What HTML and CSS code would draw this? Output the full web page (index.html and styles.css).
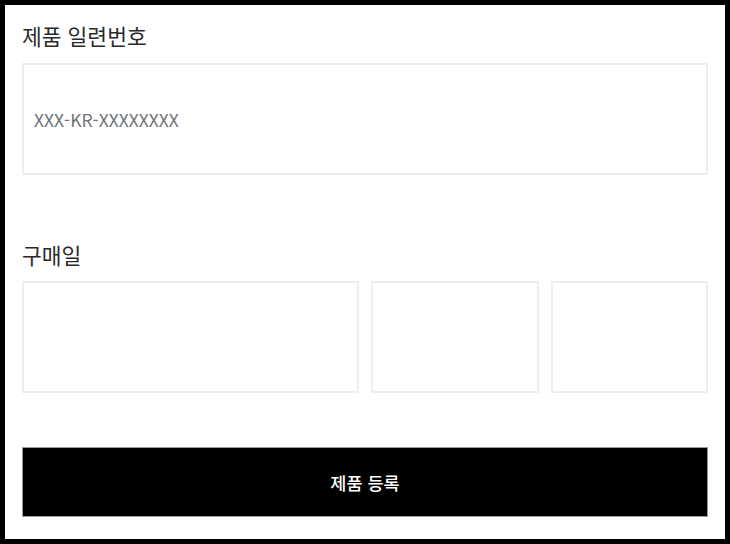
FILE: index.html
```html
<!DOCTYPE html>
<html lang="ko">
<head>
<meta charset="utf-8">
<title>제품 등록</title>
<link rel="stylesheet" href="styles.css">
</head>
<body>
<form class="panel">
  <label class="label" for="serial">제품 일련번호</label>
  <input class="field serial" id="serial" type="text" placeholder="XXX-KR-XXXXXXXX">
  <label class="label label-date">구매일</label>
  <div class="date-row">
    <input class="field" type="text" aria-label="년">
    <input class="field" type="text" aria-label="월">
    <input class="field" type="text" aria-label="일">
  </div>
  <button class="submit" type="button">제품 등록</button>
</form>
</body>
</html>
```
FILE: styles.css
```css
html, body {
  margin: 0;
  padding: 0;
  background: #000;
}
body {
  padding: 5px;
  box-sizing: border-box;
  height: 544px;
  font-family: "Noto Sans CJK KR", "Noto Sans", sans-serif;
}
.panel {
  background: #fff;
  height: 534px;
  box-sizing: border-box;
  padding: 17px 17px 0;
  display: flex;
  flex-direction: column;
}
.label {
  display: block;
  font-size: 21.5px;
  line-height: 28px;
  color: #2a2a2a;
  margin-bottom: 13px;
}
.label-date {
  margin-top: 66px;
  margin-bottom: 12px;
}
.field {
  display: block;
  box-sizing: border-box;
  height: 112px;
  border: 2px solid #eeeeee;
  background: #fff;
  margin: 0;
  padding: 0 10px;
  font-family: "Noto Sans CJK KR", "Noto Sans", sans-serif;
  font-size: 17.5px;
  color: #333;
  outline: none;
  width: 100%;
  min-width: 0;
}
.field::placeholder {
  color: #6f7478;
}
.date-row {
  display: grid;
  grid-template-columns: 337fr 168fr 157fr;
  column-gap: 12px;
}
.submit {
  margin-top: 54px;
  height: 70px;
  box-sizing: border-box;
  background: #000;
  color: #fff;
  border: 1px solid #9a9a9a;
  font-family: "Noto Sans CJK KR", "Noto Sans", sans-serif;
  font-size: 17.5px;
  font-weight: 500;
  padding: 0;
  width: 100%;
}
```
